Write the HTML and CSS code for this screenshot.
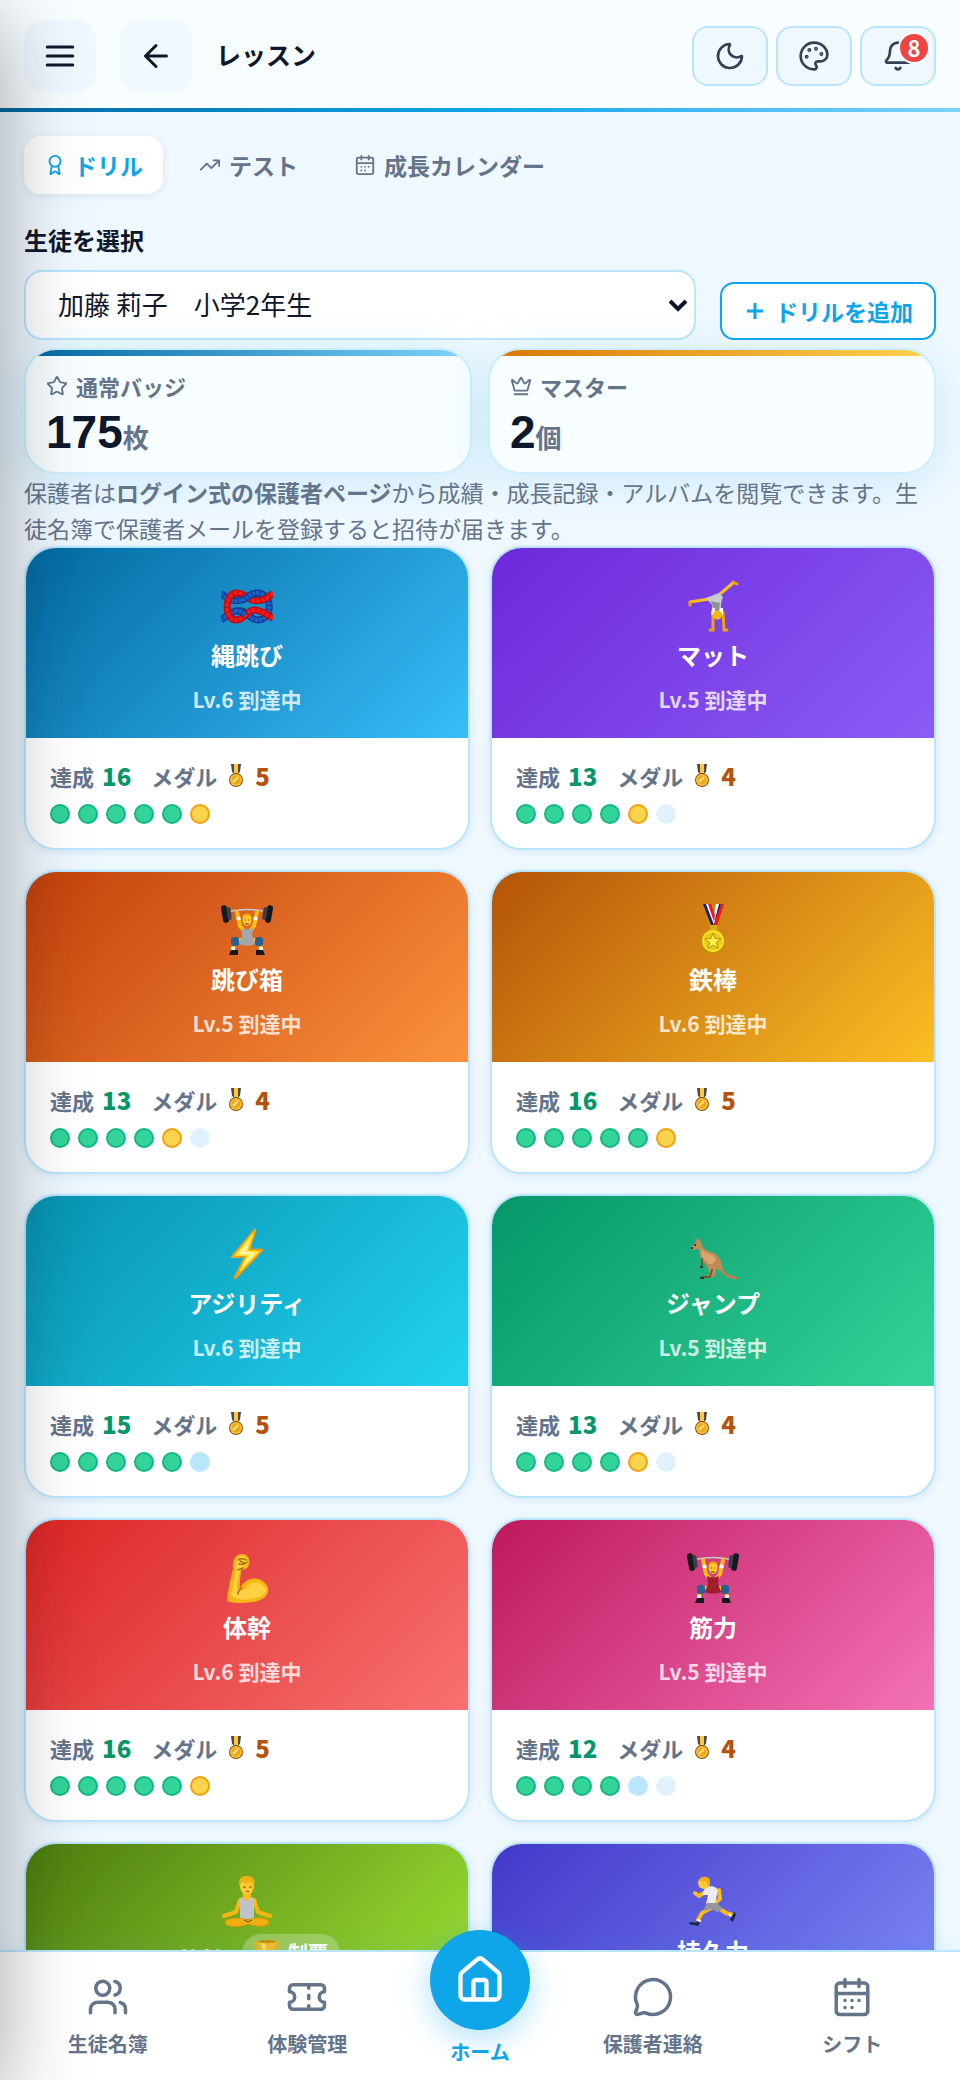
FILE: index.html
```html
<!DOCTYPE html>
<html lang="ja">

<head>
    <meta charset="UTF-8">
    <meta name="viewport" content="width=device-width, initial-scale=1.0">
    <title>レッスン</title>
    <link rel="stylesheet" href="styles.css">
</head>

<body>
    <!-- shared pictograms -->
    <svg class="sprite" aria-hidden="true">
        <symbol id="knot" viewBox="0 0 52 52">
            <g fill="none" stroke-width="7">
                <path stroke="#0b3f96" d="M0 13C8 21 14 22 21 20C29 17 29 13 37 13C52 14 52 40 37 40C29 40 27 32 20 31C12 30 8 34 0 40" />
                <path stroke="#1d62c9" stroke-width="4" stroke-dasharray="3 1" d="M0 13C8 21 14 22 21 20C29 17 29 13 37 13C52 14 52 40 37 40C29 40 27 32 20 31C12 30 8 34 0 40" />
                <path stroke="#b90d10" d="M52 13C45 20 38 22 31 20C25 17 23 13 15 13C3 14 3 40 15 40C23 40 25 31 33 30C41 30 45 35 52 38" />
                <path stroke="#f5191b" stroke-width="4" stroke-dasharray="4 1" d="M52 13C45 20 38 22 31 20C25 17 23 13 15 13C3 14 3 40 15 40C23 40 25 31 33 30C41 30 45 35 52 38" />
                <path stroke="#0b3f96" d="M21 20C27 18 29 13 36 13M14 31C18 30 20 31 24 35" />
                <path stroke="#1d62c9" stroke-width="4" stroke-dasharray="3 1" d="M21 20C27 18 29 13 36 13M14 31C18 30 20 31 24 35" />
            </g>
        </symbol>
        <symbol id="cartwheel" viewBox="0 0 52 52">
            <path fill="none" stroke="#fbbf16" stroke-width="3" stroke-linecap="round" stroke-linejoin="round" d="M22 19L3 22M33 14L46 3" />
            <path fill="none" stroke="#e9a50c" stroke-width="3" stroke-linecap="round" d="M3 22v3M46 2l4 2M26 32V50h-3M36 32l1 18h3" />
            <path fill="#c9cacd" d="M19 18L32 13L36 17L34 23V33H25V25Z" />
            <path fill="#8e9095" d="M24 21l9 2-1 8h-5z" />
            <path fill="#f2f3f5" d="M25 28h3v7h-4zM33 28h3v7h-4z" />
            <circle cx="30.500" cy="35" r="4.500" fill="#f6b80e" />
        </symbol>
        <symbol id="lifter" viewBox="0 0 52 52">
            <path stroke="#c7cbd1" stroke-width="1.500" d="M10 7C20 5 32 5 42 7" fill="none" />
            <path fill="none" stroke="#f8bd18" stroke-width="4" stroke-linejoin="round" stroke-linecap="round" d="M16 8L19 22L23 27M36 8L33 22L29 27M23 36H14L12 45M29 36H38L40 45" />
            <path stroke="#fff" stroke-width="4" d="M17 13l1 3M35 13l-1 3M12 43v3M40 43v3" />
            <path fill="currentColor" d="M20 24C24 26 28 26 32 24L31 32L34 40C29 42 23 42 18 40L21 32Z" />
            <ellipse cx="26" cy="16" rx="4.500" ry="6" fill="#ffca28" />
            <path fill="#f2a900" d="M21 14c0-6 10-6 10 0l-2-2h-6z" />
            <path stroke="#5d4210" d="M24 16h1M27 16h1M24 20h4" />
            <rect x="10" y="33" width="8" height="9" rx="3" fill="#285f94" />
            <rect x="34" y="33" width="8" height="9" rx="3" fill="#285f94" />
            <path fill="#15191d" d="M10 46h7v5H8zM35 46h7l2 5h-9z" />
            <g fill="#15191d">
                <rect x="1" y="1" width="6" height="18" rx="3" transform="rotate(-10 4 10)" />
                <rect x="6" y="3" width="4" height="13" rx="2" transform="rotate(-8 8 9)" fill="#3a3f45" />
                <rect x="45" y="1" width="6" height="18" rx="3" transform="rotate(10 48 10)" />
                <rect x="42" y="3" width="4" height="13" rx="2" transform="rotate(8 44 9)" fill="#3a3f45" />
            </g>
        </symbol>
        <symbol id="sports-medal" viewBox="0 0 52 52">
            <path fill="#14207e" d="M16 0h5l8 21h-5zM31 0h3l-6 22h-3z" />
            <path fill="#fff" d="M19 0h3l7 19-2 2zM29 0h3l-5 19-1-3z" />
            <path fill="#e71c1c" d="M21 0h3l4 11-1 7zM34 0h3l-7 22h-4z" />
            <path fill="#d7ae17" d="M23 21h7v5h-7z" />
            <circle cx="26" cy="38" r="12" fill="#bd9407" />
            <circle cx="26" cy="37" r="11" fill="#f7df25" />
            <circle cx="26" cy="37" r="9" fill="#e9c917" />
            <path fill="#fff04e" stroke="#a98308" stroke-width=".8" d="M26 29l2 5.500 6 .3-4.700 3.700 1.700 6-5-3.500-5 3.500 1.700-6-4.700-3.700 6-.3z" />
        </symbol>
        <symbol id="bolt" viewBox="0 0 52 52">
            <path fill="#fff59b" stroke="#ff9f0a" stroke-width="2.500" stroke-linejoin="round" d="M34 2L11 29L25 28L14 50L41 22L28 22Z" />
            <path fill="none" stroke="#ffe22f" stroke-width="1.500" d="M32 6L15 27.500L27 27L19 43L37 24L26 23Z" />
        </symbol>
        <symbol id="kangaroo" viewBox="0 0 52 52">
            <path fill="none" stroke="#b98255" stroke-width="3" stroke-linecap="round" d="M31 35C36 45 39 49 49 50" />
            <path fill="#c18a56" d="M4 19L9 14L8 10L11 12L12 9L14 15C17 23 20 22 26 25C33 28 37 37 34 43L29 41L28 48L24 50H14L23 46L20 38C14 31 12 29 12 21L5 22Z" />
            <path fill="#d8a772" d="M14 21C18 26 25 25 29 31C26 38 22 37 20 34C15 30 14 26 14 21Z" />
            <path fill="none" stroke="#805331" stroke-width="2" stroke-linecap="round" d="M15 31v7M25 42l-2 7h-8" />
            <circle cx="8" cy="17" r="1" fill="#241710" />
            <path stroke="#41312a" stroke-width="2" d="M4 20h2M13 39h3M13 50h4" />
        </symbol>
        <symbol id="biceps" viewBox="0 0 52 52">
            <path fill="#f5b616" d="M6 49C7 38 9 27 12 17C11 9 14 3 20 2C26 1 31 7 27 15C25 18 22 18 20 17C20 24 18 31 19 36C25 25 37 24 44 31C52 40 44 48 33 50C23 51 13 52 6 49Z" />
            <path fill="#ffd044" d="M10 43C13 32 14 23 15 15C15 9 16 5 20 4C25 4 27 8 25 13C18 18 17 24 16 34C15 39 23 40 25 36C32 27 39 30 44 35C47 42 40 46 30 47C21 49 14 47 10 43Z" />
            <path fill="none" stroke="#ad720d" stroke-width="1.500" stroke-linecap="round" d="M17 8c3-2 6-1 8 0M18 12c3 1 6 0 8-2M19 9l4 2M17 18l5-2M17 42c0-3 2-5 4-6" />
        </symbol>
        <symbol id="yoga" viewBox="0 0 52 52">
            <path fill="none" stroke="#f4b512" stroke-width="4" stroke-linecap="round" stroke-linejoin="round" d="M19 24L15 36L3 40M33 24L37 36L49 40" />
            <path fill="#f9bd19" d="M22 17h8v5l6 3-2 5H18l-2-5 6-3z" />
            <path fill="#bfc2c9" d="M19 22l3-1c1 5 7 5 8 0l3 1v21H19z" />
            <path fill="#f2ad10" stroke="#d78e06" stroke-width=".7" d="M4 46C5 42 17 41 27 44C36 40 48 42 48 46C47 52 34 51 27 48C18 52 5 52 4 46Z" />
            <ellipse cx="26" cy="10" rx="7" ry="9" fill="#ffca31" />
            <path fill="#f2b016" d="M18 10C17 1 22 0 26 0C32 0 35 4 33 10L30 6C26 8 22 7 20 5Z" />
            <path stroke="#754818" fill="none" d="M22 11h3M28 11h3M25 16q2-2 3 0M23 44l4 2 4-2" />
        </symbol>
        <symbol id="runner" viewBox="0 0 52 52">
            <path fill="none" stroke="#f8ba17" stroke-width="4" stroke-linecap="round" stroke-linejoin="round" d="M20 15L12 20L8 17M32 14L33 23L28 27M24 32L15 37L11 44M30 31L39 37L46 39" />
            <path fill="#ececef" d="M18 12C23 9 29 10 31 14L28 28H19L21 19L15 19Z" />
            <path fill="#94969b" d="M20 27h10l6 6-5 3-7-3-8 2z" />
            <circle cx="17" cy="7" r="6" fill="#ffc832" />
            <path fill="#efad11" d="M12 5C13 0 21-1 23 4L22 10L18 5Z" />
            <path fill="#182746" d="M3 46l9 1-1 3-9-2zM43 44l4-8 2 2-3 8zM9 45l4 1-2 4z" />
            <path stroke="#fff" stroke-width="2" d="M10 44l4 1M42 38l2 2" />
        </symbol>
        <symbol id="medal" viewBox="0 0 22 24">
            <path fill="#4b4950" d="M6 0h10l-1 8-4 3-4-3z" />
            <path fill="#ffc93d" d="M9 0h4v9H9z" />
            <circle cx="11" cy="16" r="7" fill="#80530c" />
            <circle cx="11" cy="16" r="6" fill="#ffc33b" />
            <circle cx="11" cy="16" r="4.500" fill="#eca81d" />
            <path stroke="#ffe082" stroke-width="2" d="M8 18l5-5" />
        </symbol>
        <symbol id="trophy" viewBox="0 0 24 24">
            <path fill="none" stroke="#f0b31c" stroke-width="2" d="M5 3H1c0 5 2 7 6 8M19 3h4c0 5-2 7-6 8" />
            <path fill="#f5bb24" d="M4 1h16c0 8-2 13-6 14v4h3v4H7v-4h3v-4C6 14 4 9 4 1z" />
            <path fill="#ffdc5a" d="M7 3h4v9C8 10 7 7 7 3z" />
            <ellipse cx="12" cy="1.500" rx="8" ry="1.500" fill="#c88a0b" />
        </symbol>
        <symbol id="calendar" viewBox="0 0 24 24">
            <path d="M8 2v4M16 2v4M3 10h18M8 14h.01M12 14h.01M16 14h.01M8 18h.01M12 18h.01" />
            <rect x="3" y="4" width="18" height="18" rx="2" />
        </symbol>
    </svg>

    <div class="app">
        <header class="header">
            <button class="header-btn" type="button" aria-label="メニュー">
                <svg class="icon icon-lg" viewBox="0 0 24 24"><path d="M3.500 6h17M3.500 12h17M3.500 18h17" /></svg>
            </button>
            <button class="header-btn" type="button" aria-label="戻る">
                <svg class="icon icon-lg" viewBox="0 0 24 24"><path d="m12 19-7-7 7-7M19 12H5" /></svg>
            </button>
            <h1 class="header-title">レッスン</h1>
            <div class="header-tools">
                <button class="tool-btn" type="button" aria-label="ダークモード">
                    <svg class="icon icon-md" viewBox="0 0 24 24"><path d="M20.985 12.486a9 9 0 1 1-9.473-9.472c.405-.022.617.46.402.803a6 6 0 0 0 8.268 8.268c.344-.215.825-.004.803.401" /></svg>
                </button>
                <button class="tool-btn" type="button" aria-label="テーマ">
                    <svg class="icon icon-md" viewBox="0 0 24 24"><path d="M12 22a1 1 0 0 1 0-20 10 9 0 0 1 10 9 5 5 0 0 1-5 5h-2.250a1.750 1.750 0 0 0-1.400 2.800l.3.400a1.750 1.750 0 0 1-1.400 2.800z" /><g fill="currentColor"><circle cx="13.500" cy="6.500" r=".5" /><circle cx="17.500" cy="10.500" r=".5" /><circle cx="6.500" cy="12.500" r=".5" /><circle cx="8.500" cy="7.500" r=".5" /></g></svg>
                </button>
                <button class="tool-btn" type="button" aria-label="お知らせ">
                    <svg class="icon icon-md" viewBox="0 0 24 24"><path d="M10.268 21a2 2 0 0 0 3.464 0M3.262 15.326A1 1 0 0 0 4 17h16a1 1 0 0 0 .74-1.673C19.410 13.956 18 12.499 18 8A6 6 0 0 0 6 8c0 4.499-1.411 5.956-2.738 7.326" /></svg>
                    <span class="notice">8</span>
                </button>
            </div>
        </header>

        <main class="main">
            <nav class="tabs">
                <button class="tab active" type="button">
                    <svg class="icon icon-sm" viewBox="0 0 24 24"><path d="m15.477 12.890 1.515 8.526a.5.5 0 0 1-.81.470l-3.580-2.687a1 1 0 0 0-1.197 0l-3.586 2.686a.5.5 0 0 1-.81-.469l1.514-8.526" /><circle cx="12" cy="8" r="6" /></svg>
                    <span>ドリル</span>
                </button>
                <button class="tab" type="button">
                    <svg class="icon icon-sm" viewBox="0 0 24 24"><path d="M16 7h6v6M22 7l-8.500 8.500-5-5L2 17" /></svg>
                    <span>テスト</span>
                </button>
                <button class="tab" type="button">
                    <svg class="icon icon-sm"><use href="#calendar" /></svg>
                    <span>成長カレンダー</span>
                </button>
            </nav>

            <label class="field-label" for="student">生徒を選択</label>
            <div class="student-row">
                <div class="select-wrap">
                    <select id="student" class="student-select">
                        <option>加藤 莉子　小学2年生</option>
                    </select>
                    <svg class="select-arrow" viewBox="0 0 20 14" aria-hidden="true"><path d="M2 3l8 8 8-8" /></svg>
                </div>
                <button class="add-btn" type="button">
                    <svg class="icon icon-plus" viewBox="0 0 24 24"><path d="M4 12h16M12 4v16" /></svg>
                    <span>ドリルを追加</span>
                </button>
            </div>

            <section class="summary">
                <div class="summary-card">
                    <div class="summary-label">
                        <svg class="icon icon-sm" viewBox="0 0 24 24"><path d="M11.525 2.295a.53.53 0 0 1 .95 0l2.310 4.679a2.123 2.123 0 0 0 1.595 1.160l5.166.756a.53.53 0 0 1 .294.904l-3.736 3.638a2.123 2.123 0 0 0-.611 1.878l.882 5.140a.53.53 0 0 1-.771.560l-4.618-2.428a2.122 2.122 0 0 0-1.973 0L6.396 21.010a.53.53 0 0 1-.77-.560l.881-5.139a2.122 2.122 0 0 0-.611-1.879L2.160 9.795a.53.53 0 0 1 .294-.906l5.165-.755a2.122 2.122 0 0 0 1.597-1.160z" /></svg>
                        <span>通常バッジ</span>
                    </div>
                    <div class="summary-value">175<span class="unit">枚</span></div>
                </div>
                <div class="summary-card gold">
                    <div class="summary-label">
                        <svg class="icon icon-sm" viewBox="0 0 24 24"><path d="M11.562 3.266a.5.5 0 0 1 .876 0L15.390 8.870a1 1 0 0 0 1.516.294L21.183 5.500a.5.5 0 0 1 .798.519l-2.834 10.246a1 1 0 0 1-.956.734H5.810a1 1 0 0 1-.957-.734L2.020 6.020a.5.5 0 0 1 .798-.519l4.276 3.664a1 1 0 0 0 1.516-.294zM5 21h14" /></svg>
                        <span>マスター</span>
                    </div>
                    <div class="summary-value">2<span class="unit">個</span></div>
                </div>
            </section>

            <p class="guide">保護者は<strong>ログイン式の保護者ページ</strong>から成績・成長記録・アルバムを閲覧できます。生徒名簿で保護者メールを登録すると招待が届きます。</p>

            <section class="drills">
                <a class="drill" href="#">
                    <div class="drill-head blue">
                        <svg class="emoji"><use href="#knot" /></svg>
                        <h2 class="drill-title">縄跳び</h2>
                        <p class="drill-level">Lv.6 到達中</p>
                    </div>
                    <div class="drill-body">
                        <p class="counts"><span>達成 <b class="done">16</b></span><span>メダル <svg class="medal"><use href="#medal" /></svg> <b class="won">5</b></span></p>
                        <div class="dots"><i class="dot full"></i><i class="dot full"></i><i class="dot full"></i><i class="dot full"></i><i class="dot full"></i><i class="dot gold"></i></div>
                    </div>
                </a>
                <a class="drill" href="#">
                    <div class="drill-head purple">
                        <svg class="emoji"><use href="#cartwheel" /></svg>
                        <h2 class="drill-title">マット</h2>
                        <p class="drill-level">Lv.5 到達中</p>
                    </div>
                    <div class="drill-body">
                        <p class="counts"><span>達成 <b class="done">13</b></span><span>メダル <svg class="medal"><use href="#medal" /></svg> <b class="won">4</b></span></p>
                        <div class="dots"><i class="dot full"></i><i class="dot full"></i><i class="dot full"></i><i class="dot full"></i><i class="dot gold"></i><i class="dot"></i></div>
                    </div>
                </a>
                <a class="drill" href="#">
                    <div class="drill-head orange">
                        <svg class="emoji grey-suit"><use href="#lifter" /></svg>
                        <h2 class="drill-title">跳び箱</h2>
                        <p class="drill-level">Lv.5 到達中</p>
                    </div>
                    <div class="drill-body">
                        <p class="counts"><span>達成 <b class="done">13</b></span><span>メダル <svg class="medal"><use href="#medal" /></svg> <b class="won">4</b></span></p>
                        <div class="dots"><i class="dot full"></i><i class="dot full"></i><i class="dot full"></i><i class="dot full"></i><i class="dot gold"></i><i class="dot"></i></div>
                    </div>
                </a>
                <a class="drill" href="#">
                    <div class="drill-head amber">
                        <svg class="emoji"><use href="#sports-medal" /></svg>
                        <h2 class="drill-title">鉄棒</h2>
                        <p class="drill-level">Lv.6 到達中</p>
                    </div>
                    <div class="drill-body">
                        <p class="counts"><span>達成 <b class="done">16</b></span><span>メダル <svg class="medal"><use href="#medal" /></svg> <b class="won">5</b></span></p>
                        <div class="dots"><i class="dot full"></i><i class="dot full"></i><i class="dot full"></i><i class="dot full"></i><i class="dot full"></i><i class="dot gold"></i></div>
                    </div>
                </a>
                <a class="drill" href="#">
                    <div class="drill-head cyan">
                        <svg class="emoji"><use href="#bolt" /></svg>
                        <h2 class="drill-title">アジリティ</h2>
                        <p class="drill-level">Lv.6 到達中</p>
                    </div>
                    <div class="drill-body">
                        <p class="counts"><span>達成 <b class="done">15</b></span><span>メダル <svg class="medal"><use href="#medal" /></svg> <b class="won">5</b></span></p>
                        <div class="dots"><i class="dot full"></i><i class="dot full"></i><i class="dot full"></i><i class="dot full"></i><i class="dot full"></i><i class="dot current"></i></div>
                    </div>
                </a>
                <a class="drill" href="#">
                    <div class="drill-head green">
                        <svg class="emoji"><use href="#kangaroo" /></svg>
                        <h2 class="drill-title">ジャンプ</h2>
                        <p class="drill-level">Lv.5 到達中</p>
                    </div>
                    <div class="drill-body">
                        <p class="counts"><span>達成 <b class="done">13</b></span><span>メダル <svg class="medal"><use href="#medal" /></svg> <b class="won">4</b></span></p>
                        <div class="dots"><i class="dot full"></i><i class="dot full"></i><i class="dot full"></i><i class="dot full"></i><i class="dot gold"></i><i class="dot"></i></div>
                    </div>
                </a>
                <a class="drill" href="#">
                    <div class="drill-head red">
                        <svg class="emoji"><use href="#biceps" /></svg>
                        <h2 class="drill-title">体幹</h2>
                        <p class="drill-level">Lv.6 到達中</p>
                    </div>
                    <div class="drill-body">
                        <p class="counts"><span>達成 <b class="done">16</b></span><span>メダル <svg class="medal"><use href="#medal" /></svg> <b class="won">5</b></span></p>
                        <div class="dots"><i class="dot full"></i><i class="dot full"></i><i class="dot full"></i><i class="dot full"></i><i class="dot full"></i><i class="dot gold"></i></div>
                    </div>
                </a>
                <a class="drill" href="#">
                    <div class="drill-head pink">
                        <svg class="emoji red-suit"><use href="#lifter" /></svg>
                        <h2 class="drill-title">筋力</h2>
                        <p class="drill-level">Lv.5 到達中</p>
                    </div>
                    <div class="drill-body">
                        <p class="counts"><span>達成 <b class="done">12</b></span><span>メダル <svg class="medal"><use href="#medal" /></svg> <b class="won">4</b></span></p>
                        <div class="dots"><i class="dot full"></i><i class="dot full"></i><i class="dot full"></i><i class="dot full"></i><i class="dot current"></i><i class="dot"></i></div>
                    </div>
                </a>
                <a class="drill" href="#">
                    <div class="drill-head lime">
                        <svg class="emoji"><use href="#yoga" /></svg>
                        <h2 class="drill-title cleared">
                            <span>柔軟性</span>
                            <span class="pill"><svg class="cup"><use href="#trophy" /></svg>制覇</span>
                        </h2>
                    </div>
                </a>
                <a class="drill" href="#">
                    <div class="drill-head indigo">
                        <svg class="emoji"><use href="#runner" /></svg>
                        <h2 class="drill-title">持久力</h2>
                    </div>
                </a>
            </section>
        </main>

        <nav class="bottom-nav">
            <a class="nav-item" href="#">
                <svg class="icon icon-nav" viewBox="0 0 24 24"><path d="M16 21v-2a4 4 0 0 0-4-4H6a4 4 0 0 0-4 4v2M16 3.128a4 4 0 0 1 0 7.744M22 21v-2a4 4 0 0 0-3-3.870" /><circle cx="9" cy="7" r="4" /></svg>
                <span>生徒名簿</span>
            </a>
            <a class="nav-item" href="#">
                <svg class="icon icon-nav" viewBox="0 0 24 24"><path d="M2 9a3 3 0 0 1 0 6v2a2 2 0 0 0 2 2h16a2 2 0 0 0 2-2v-2a3 3 0 0 1 0-6V7a2 2 0 0 0-2-2H4a2 2 0 0 0-2 2ZM13 5v2M13 17v2M13 11v2" /></svg>
                <span>体験管理</span>
            </a>
            <a class="nav-item home" href="#">
                <span class="home-circle">
                    <svg class="icon icon-home" viewBox="0 0 24 24"><path d="M15 21v-8a1 1 0 0 0-1-1h-4a1 1 0 0 0-1 1v8M3 10a2 2 0 0 1 .709-1.528l7-5.999a2 2 0 0 1 2.582 0l7 5.999A2 2 0 0 1 21 10v9a2 2 0 0 1-2 2H5a2 2 0 0 1-2-2z" /></svg>
                </span>
                <span>ホーム</span>
            </a>
            <a class="nav-item" href="#">
                <svg class="icon icon-nav" viewBox="0 0 24 24"><path d="M2.992 16.342a2 2 0 0 1 .094 1.167l-1.065 3.290a1 1 0 0 0 1.236 1.168l3.413-.998a2 2 0 0 1 1.099.092 10 10 0 1 0-4.777-4.719" /></svg>
                <span>保護者連絡</span>
            </a>
            <a class="nav-item" href="#">
                <svg class="icon icon-nav"><use href="#calendar" /></svg>
                <span>シフト</span>
            </a>
        </nav>
    </div>

    <!-- closed side menu, only its shadow reaches the page -->
    <aside class="drawer" aria-hidden="true"></aside>
</body>

</html>
```

FILE: styles.css
```css
* {
    box-sizing: border-box;
}

body {
    margin: 0;
    background: #f0f8ff;
    color: #0f172a;
    font-family: "Noto Sans CJK JP", sans-serif;
}

h1, h2, p {
    margin: 0;
}

a {
    color: inherit;
    text-decoration: none;
}

button, select {
    font-family: inherit;
    cursor: pointer;
}

.sprite {
    position: absolute;
    width: 0;
    height: 0;
}

.app {
    display: flex;
    flex-direction: column;
    height: 100vh;
}

/* icons */
.icon {
    flex: none;
    fill: none;
    stroke: currentColor;
    stroke-width: 2;
    stroke-linecap: round;
    stroke-linejoin: round;
}
.icon-sm {
    width: 22px;
    height: 22px;
}
.icon-plus {
    width: 24px;
    height: 24px;
    stroke-width: 3;
    stroke-linecap: butt;
}
.icon-md {
    width: 32px;
    height: 32px;
}
.icon-lg {
    width: 36px;
    height: 36px;
}
.icon-nav {
    width: 42px;
    height: 42px;
}
.icon-home {
    width: 52px;
    height: 52px;
}

/* header */
.header {
    display: flex;
    align-items: center;
    gap: 24px;
    padding: 20px 24px 16px;
    background: #f8fdff;
    border-bottom: 4px solid;
    border-image: linear-gradient(90deg, #0369a1, #0ea5e9 50%, #7dd3fc) 1;
}
.header-btn {
    display: flex;
    align-items: center;
    justify-content: center;
    width: 72px;
    height: 72px;
    padding: 0;
    border: 0;
    border-radius: 20px;
    background: #f0f8ff;
    color: #0f172a;
}
.header-title {
    flex: 1;
    padding-bottom: 4px;
    font-size: 25px;
    line-height: 36px;
}
.header-tools {
    display: flex;
    gap: 8px;
}
.tool-btn {
    position: relative;
    display: flex;
    align-items: center;
    justify-content: center;
    width: 76px;
    height: 60px;
    padding: 0;
    border: 2px solid #bae6fd;
    border-radius: 16px;
    background: #f0f8ff;
    color: #334155;
}
.notice {
    position: absolute;
    top: 4px;
    right: 4px;
    width: 32px;
    height: 32px;
    border: 2px solid #fff;
    border-radius: 50%;
    background: #ef4444;
    color: #fff;
    font-size: 22px;
    font-weight: 700;
    line-height: 26px;
    text-align: center;
}

/* content */
.main {
    flex: 1;
    min-height: 0;
    overflow-y: auto;
    scrollbar-width: none;
    padding: 24px 24px 0;
}
.tabs {
    display: flex;
    gap: 16px;
    margin-bottom: 28px;
}
.tab {
    display: flex;
    align-items: center;
    gap: 8px;
    height: 58px;
    padding: 0 20px;
    border: 0;
    border-radius: 16px;
    background: none;
    color: #64748b;
    font-size: 23px;
    font-weight: 700;
}
.tab.active {
    background: #fff;
    color: #0ea5e9;
    box-shadow: 0 2px 8px rgba(15, 23, 42, 0.08);
}
.field-label {
    display: block;
    margin-bottom: 12px;
    font-size: 24px;
    font-weight: 700;
    line-height: 36px;
}
.student-row {
    display: flex;
    align-items: flex-end;
    gap: 24px;
    margin-bottom: 8px;
}
.select-wrap {
    position: relative;
    flex: 1;
}
.student-select {
    display: block;
    appearance: none;
    width: 100%;
    height: 70px;
    padding: 0 48px 4px 32px;
    border: 2px solid #bae6fd;
    border-radius: 18px;
    background: #fff;
    color: #0f172a;
    font-size: 26px;
}
.select-arrow {
    position: absolute;
    top: 28px;
    right: 8px;
    width: 20px;
    height: 14px;
    fill: none;
    stroke: #0f172a;
    stroke-width: 4;
    pointer-events: none;
}
.add-btn {
    display: flex;
    align-items: center;
    gap: 8px;
    height: 58px;
    padding: 0 21px;
    border: 2px solid #0ea5e9;
    border-radius: 14px;
    background: #fff;
    color: #0ea5e9;
    font-size: 23px;
    font-weight: 700;
}

/* badge totals */
.summary {
    display: grid;
    grid-template-columns: 1fr 1fr;
    gap: 16px;
}
.summary-card {
    position: relative;
    overflow: hidden;
    padding: 22px 20px 16px;
    border: 2px solid #cdeefe;
    border-radius: 32px;
    background: #f8fdff;
    box-shadow: 0 8px 48px rgba(14, 165, 233, 0.16);
}
.summary-card::before {
    content: "";
    position: absolute;
    top: 0;
    left: 0;
    right: 0;
    height: 6px;
    background: linear-gradient(90deg, #0369a1, #7dd3fc);
}
.summary-card.gold::before {
    background: linear-gradient(90deg, #d97706, #fcd34d);
}
.summary-label {
    display: flex;
    align-items: center;
    gap: 8px;
    margin-bottom: 8px;
    color: #64748b;
    font-size: 22px;
    font-weight: 700;
    line-height: 28px;
}
.summary-value {
    height: 48px;
    font-family: "Liberation Sans", "Noto Sans CJK JP", sans-serif;
    font-size: 46px;
    font-weight: 700;
    line-height: 48px;
}
.unit {
    color: #64748b;
    font-size: 26px;
    line-height: 26px;
}
.guide {
    position: relative;
    color: #64748b;
    font-size: 23px;
    line-height: 36px;
}

/* drill cards */
.drills {
    position: relative;
    display: grid;
    grid-template-columns: 1fr 1fr;
    gap: 20px;
}
.drill {
    overflow: hidden;
    border: 2px solid #bae6fd;
    border-radius: 32px;
    background: #fff;
    box-shadow: 0 2px 8px rgba(14, 116, 180, 0.12);
}
.drill-head {
    display: flex;
    flex-direction: column;
    align-items: center;
    min-height: 190px;
    padding: 32px 24px 24px;
    color: #fff;
}
.blue { background: linear-gradient(135deg, #0369a1, #38bdf8); }
.purple { background: linear-gradient(135deg, #6d28d9, #8b5cf6); }
.orange { background: linear-gradient(135deg, #c2410c, #fb923c); }
.amber { background: linear-gradient(135deg, #b45309, #fbbf24); }
.cyan { background: linear-gradient(135deg, #0891b2, #22d3ee); }
.green { background: linear-gradient(135deg, #059669, #34d399); }
.red { background: linear-gradient(135deg, #dc2626, #f87171); }
.pink { background: linear-gradient(135deg, #be185d, #f472b6); }
.lime { background: linear-gradient(135deg, #4d7c0f, #a3e635); }
.indigo { background: linear-gradient(135deg, #4338ca, #818cf8); }

.emoji {
    width: 52px;
    height: 52px;
    margin-bottom: 6px;
}
.grey-suit {
    color: #a3a6aa;
}
.red-suit {
    color: #9f1d2c;
}
.drill-title {
    margin-bottom: 12px;
    font-size: 24px;
    font-weight: 700;
    line-height: 34px;
}
.drill-title.cleared {
    display: flex;
    align-items: flex-end;
    gap: 16px;
    line-height: 24px;
}
.pill {
    display: flex;
    align-items: center;
    gap: 8px;
    height: 38px;
    padding: 0 12px;
    border-radius: 20px;
    background: rgba(255, 255, 255, 0.25);
    font-size: 20px;
    font-weight: 700;
}
.cup {
    width: 26px;
    height: 26px;
}
.drill-level {
    color: rgba(255, 255, 255, 0.8);
    font-size: 21px;
    font-weight: 700;
    line-height: 30px;
}
.drill-body {
    padding: 22px 24px 24px;
}
.counts {
    display: flex;
    gap: 20px;
    margin-bottom: 12px;
    color: #64748b;
    font-size: 22px;
    font-weight: 700;
    line-height: 32px;
}
.counts span {
    display: flex;
    align-items: center;
    gap: 8px;
}
.counts b {
    font-size: 24px;
}
.done {
    color: #059669;
}
.won {
    color: #b45309;
}
.medal {
    width: 22px;
    height: 24px;
}
.dots {
    display: flex;
    gap: 8px;
}
.dot {
    width: 20px;
    height: 20px;
    border: 2px solid #e0f2fe;
    border-radius: 50%;
    background: #e0f2fe;
}
.dot.full {
    border-color: #10b981;
    background: #34d399;
}
.dot.gold {
    border-color: #f59e0b;
    background: #fcd34d;
}
.dot.current {
    border-color: #bae6fd;
    background: #bae6fd;
}

/* bottom navigation */
.bottom-nav {
    position: relative;
    display: flex;
    height: 130px;
    padding: 0 8px;
    border-top: 2px solid #bae6fd;
    background: #fff;
    box-shadow: 0 -4px 24px rgba(14, 165, 233, 0.08);
}
.nav-item {
    flex: 1;
    display: flex;
    flex-direction: column;
    align-items: center;
    gap: 14px;
    padding-top: 24px;
    color: #64748b;
    font-size: 20px;
    font-weight: 700;
    line-height: 24px;
}
.nav-item.home {
    flex: 0 0 146px;
    gap: 10px;
    padding-top: 0;
    margin-top: -22px;
    color: #0ea5e9;
}
.home-circle {
    display: flex;
    align-items: center;
    justify-content: center;
    width: 100px;
    height: 100px;
    border-radius: 50%;
    background: #0ea5e9;
    color: #fff;
    box-shadow: 0 8px 32px rgba(14, 165, 233, 0.35);
}

.drawer {
    position: fixed;
    top: 0;
    bottom: 0;
    left: -320px;
    width: 320px;
    box-shadow: 0 20px 80px rgba(0, 0, 0, 0.36);
    pointer-events: none;
}
```
